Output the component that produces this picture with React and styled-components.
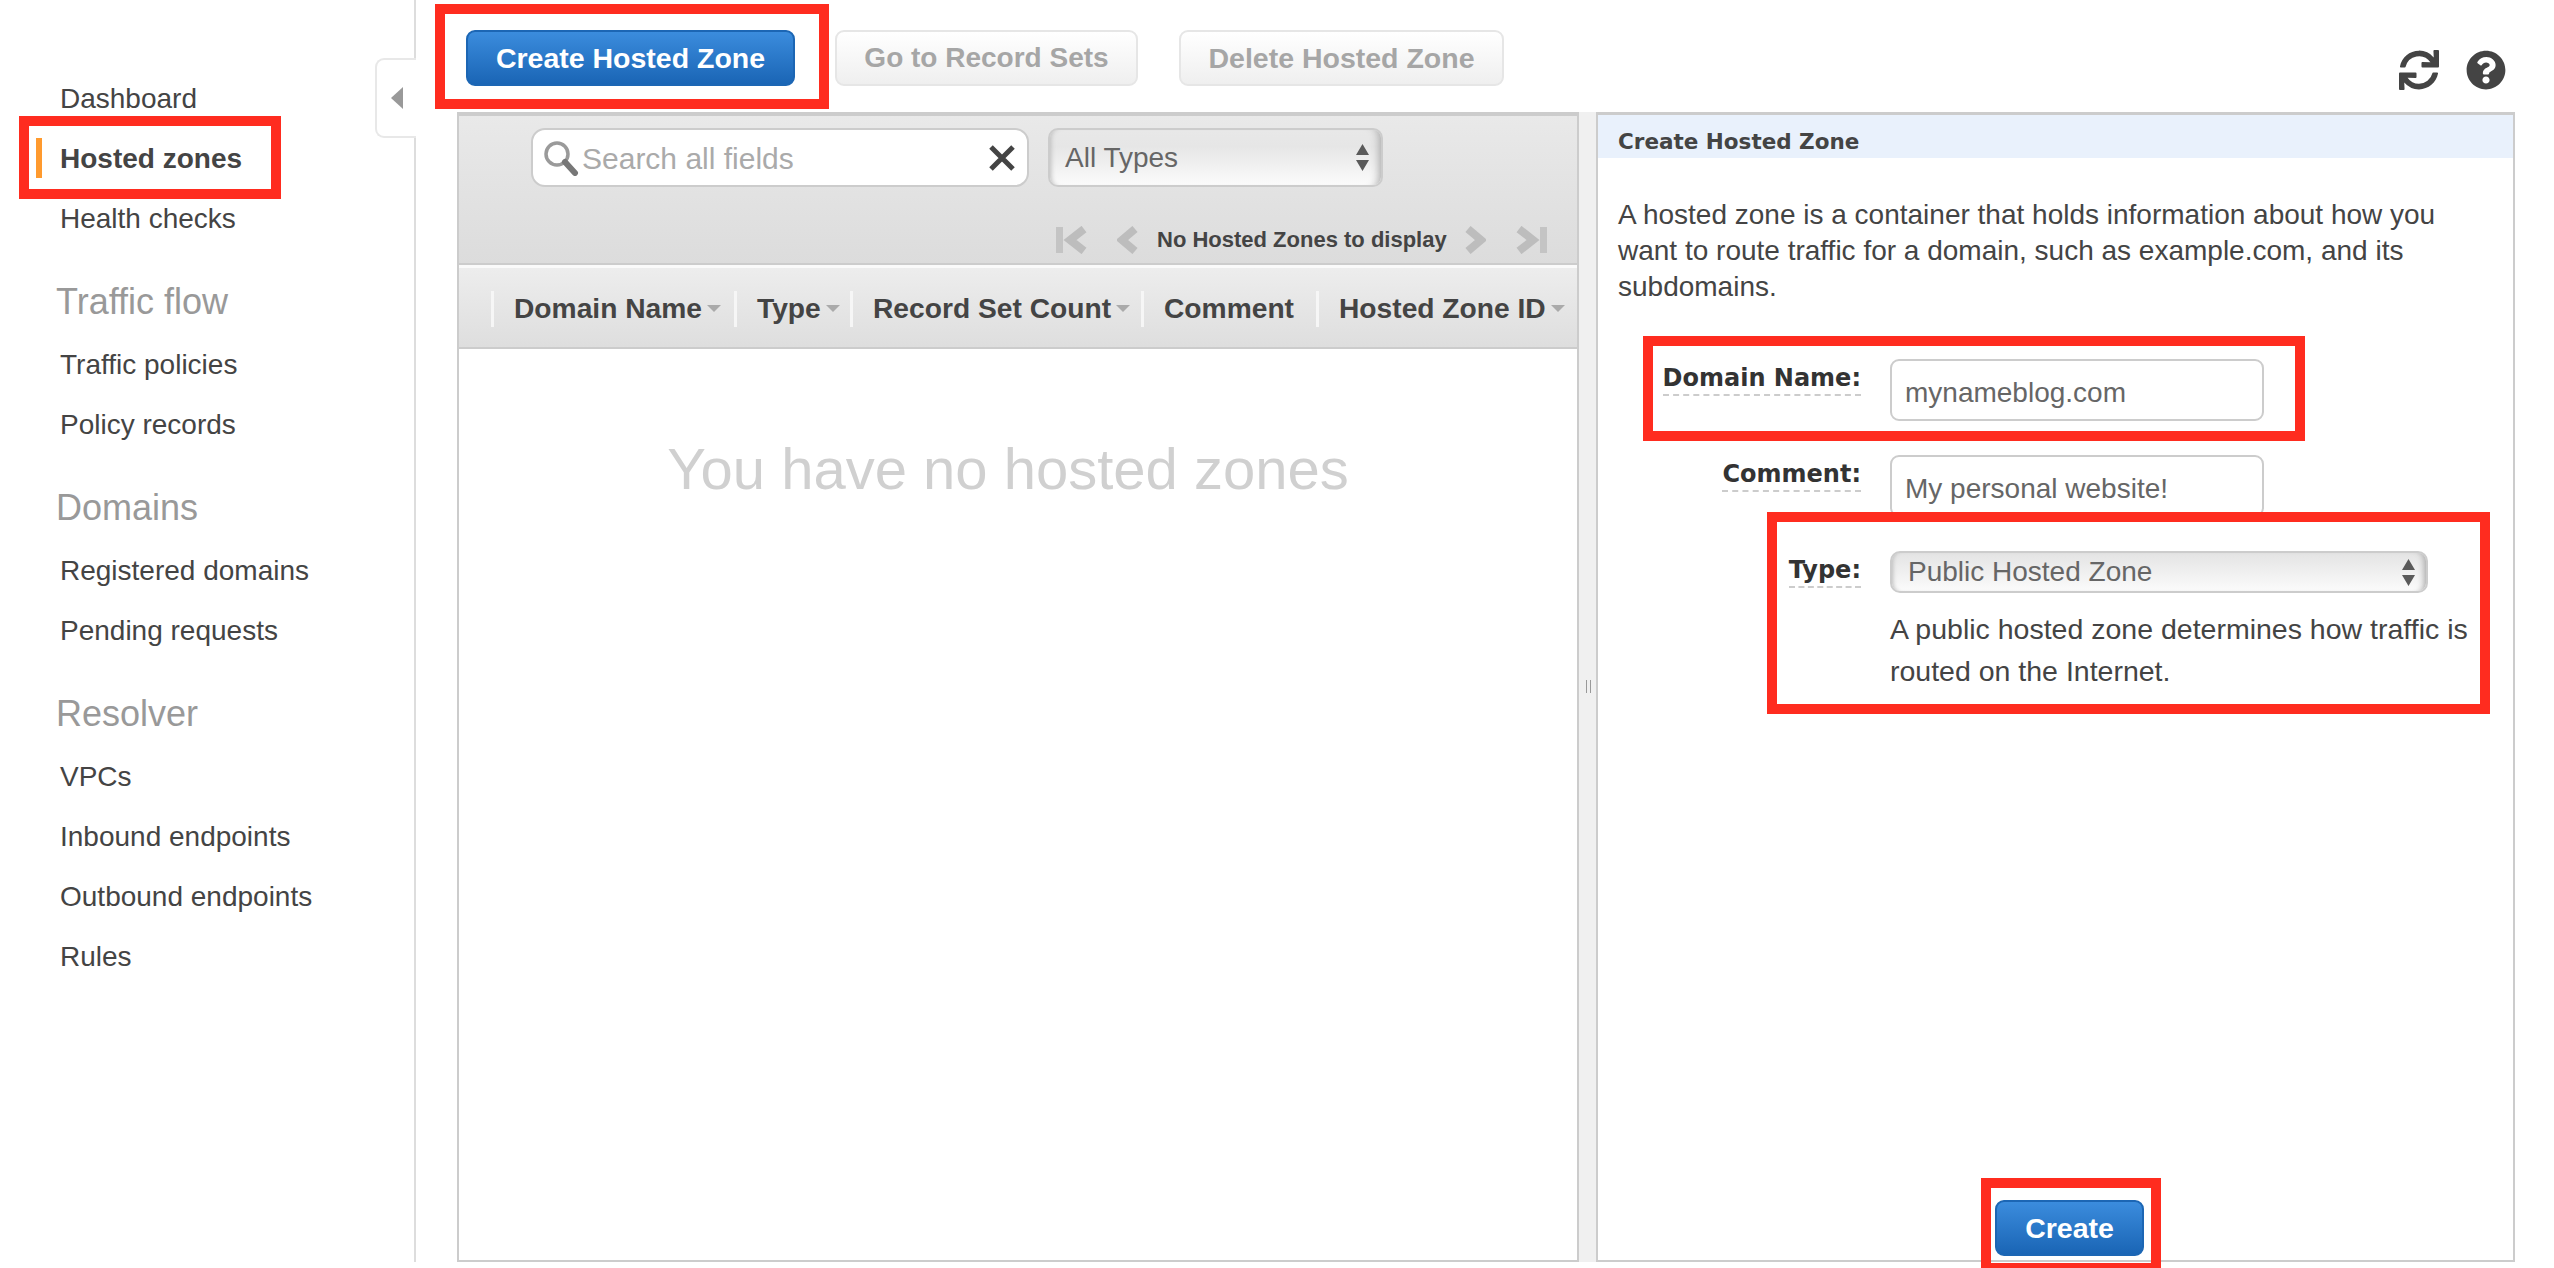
import React from "react";
import styled, { createGlobalStyle } from "styled-components";
import { FaSync, FaQuestionCircle } from "react-icons/fa";

const navGroups = [
    { items: ["Dashboard", "Hosted zones", "Health checks"] },
    { title: "Traffic flow", items: ["Traffic policies", "Policy records"] },
    { title: "Domains", items: ["Registered domains", "Pending requests"] },
    { title: "Resolver", items: ["VPCs", "Inbound endpoints", "Outbound endpoints", "Rules"] },
];

const columns = [
    { label: "Domain Name", width: 243, sort: true },
    { label: "Type", width: 116, sort: true },
    { label: "Record Set Count", width: 291, sort: true },
    { label: "Comment", width: 175 },
    { label: "Hosted Zone ID", width: 263, sort: true },
];

function SearchIcon() {
    return (
        <SearchGlyph viewBox="0 0 36 36">
            <circle cx="14" cy="14" r="11" fill="#fff" stroke="#9a9a9a" strokeWidth="3.5" />
            <path d="M22 22 L32 33" stroke="#777" strokeWidth="6" strokeLinecap="round" />
        </SearchGlyph>
    );
}

function ClearIcon() {
    return (
        <ClearGlyph viewBox="0 0 28 28">
            <path d="M3 3 L25 25 M25 3 L3 25" stroke="#444" strokeWidth="5" />
        </ClearGlyph>
    );
}

function UpDownArrows() {
    return (
        <ArrowGlyph viewBox="0 0 13 27">
            <path d="M6.5 0 L13 11 H0 Z M0 16 H13 L6.5 27 Z" fill="#5a5a5a" />
        </ArrowGlyph>
    );
}

function PagerFirst() {
    return (
        <PagerGlyph $width={36} viewBox="0 0 36 28">
            <rect x="0" y="1" width="7" height="26" fill="#c4c4c4" />
            <path d="M28 3 L14 14 L28 25" fill="none" stroke="#bdbdbd" strokeWidth="8" />
        </PagerGlyph>
    );
}

function PagerLast() {
    return (
        <PagerGlyph $width={36} viewBox="0 0 36 28">
            <rect x="24" y="1" width="7" height="26" fill="#c4c4c4" />
            <path d="M3 3 L17 14 L3 25" fill="none" stroke="#bdbdbd" strokeWidth="8" />
        </PagerGlyph>
    );
}

function PagerStep({ next, left, right }) {
    return (
        <PagerGlyph $width={22} $left={left} $right={right} viewBox="0 0 22 28">
            <path
                d={next ? "M4 3 L17 14 L4 25" : "M18 3 L5 14 L18 25"}
                fill="none"
                stroke="#bdbdbd"
                strokeWidth="8"
            />
        </PagerGlyph>
    );
}

function App() {
    return (
        <Page>
            <GlobalStyle />
            <Sidebar>
                <CollapseTab>
                    <CollapseArrow />
                </CollapseTab>
                {navGroups.map((group, i) => (
                    <NavGroup key={i}>
                        {group.title && <NavHeading>{group.title}</NavHeading>}
                        {group.items.map((item) => (
                            <NavItem key={item} $active={item === "Hosted zones"}>
                                {item}
                            </NavItem>
                        ))}
                    </NavGroup>
                ))}
            </Sidebar>

            <Main>
                <Toolbar>
                    <PrimaryButton $width={329}>Create Hosted Zone</PrimaryButton>
                    <DisabledButton $gap={40} $width={303} $size={28}>Go to Record Sets</DisabledButton>
                    <DisabledButton $gap={41} $width={325} $size={28.5}>Delete Hosted Zone</DisabledButton>
                    <ToolIcons>
                        <FaSync size={40} />
                        <FaQuestionCircle size={40} />
                    </ToolIcons>
                </Toolbar>

                <Panels>
                    <ListPanel>
                        <ListControls>
                            <FilterRow>
                                <SearchBox>
                                    <SearchIcon />
                                    <SearchText>Search all fields</SearchText>
                                    <ClearIcon />
                                </SearchBox>
                                <TypeFilter>
                                    All Types
                                    <UpDownArrows />
                                </TypeFilter>
                            </FilterRow>
                            <PagerRow>
                                <PagerFirst />
                                <PagerStep left={25} right={18} />
                                <PagerText>No Hosted Zones to display</PagerText>
                                <PagerStep next left={17} right={30} />
                                <PagerLast />
                            </PagerRow>
                        </ListControls>
                        <TableHead>
                            {columns.map((col) => (
                                <HeadCell key={col.label} $width={col.width}>
                                    {col.label}
                                    {col.sort && <SortArrow />}
                                </HeadCell>
                            ))}
                        </TableHead>
                        <EmptyText>You have no hosted zones</EmptyText>
                    </ListPanel>

                    <Splitter>
                        <SplitHandle />
                    </Splitter>

                    <FormPanel>
                        <FormTitle>Create Hosted Zone</FormTitle>
                        <Intro>
                            A hosted zone is a container that holds information about how you want to route
                            traffic for a domain, such as example.com, and its subdomains.
                        </Intro>
                        <FormGrid>
                            <FieldLabel>
                                <span>Domain Name:</span>
                            </FieldLabel>
                            <TextField>mynameblog.com</TextField>
                            <FieldLabel>
                                <span>Comment:</span>
                            </FieldLabel>
                            <TextField>My personal website!</TextField>
                            <FieldLabel>
                                <span>Type:</span>
                            </FieldLabel>
                            <div>
                                <TypeSelect>
                                    Public Hosted Zone
                                    <UpDownArrows />
                                </TypeSelect>
                                <HelpText>
                                    A public hosted zone determines how traffic is routed on the Internet.
                                </HelpText>
                            </div>
                        </FormGrid>
                        <FormFooter>
                            <SubmitButton $width={149}>Create</SubmitButton>
                        </FormFooter>
                    </FormPanel>
                </Panels>
            </Main>

            <Callout $x={19} $y={116} $w={262} $h={83} />
            <Callout $x={435} $y={4} $w={394} $h={105} />
            <Callout $x={1643} $y={336} $w={662} $h={105} />
            <Callout $x={1767} $y={512} $w={723} $h={202} />
            <Callout $x={1981} $y={1178} $w={180} $h={95} />
        </Page>
    );
}

const GlobalStyle = createGlobalStyle`
    html, body {
        margin: 0;
        padding: 0;
        background: #fff;
        overflow: hidden;
    }
    * {
        box-sizing: border-box;
    }
`;

const Page = styled.div`
    position: relative;
    display: flex;
    width: 2554px;
    height: 1268px;
    overflow: hidden;
    background: #fff;
    color: #444;
    font-family: "Liberation Sans", Arial, sans-serif;
`;

const Sidebar = styled.aside`
    position: relative;
    flex: none;
    width: 416px;
    height: 1262px;
    padding-top: 69px;
    border-right: 2px solid #ddd;
`;

const CollapseTab = styled.div`
    position: absolute;
    top: 58px;
    right: -2px;
    width: 41px;
    height: 80px;
    display: flex;
    align-items: center;
    padding-left: 14px;
    background: #fff;
    border: 2px solid #e8e8e8;
    border-right: 0;
    border-radius: 9px 0 0 9px;
`;

const CollapseArrow = styled.div`
    width: 0;
    height: 0;
    border-top: 11px solid transparent;
    border-bottom: 11px solid transparent;
    border-right: 12px solid #999;
`;

const NavGroup = styled.nav`
    margin-bottom: 20px;
`;

const NavHeading = styled.h3`
    margin: 0;
    height: 66px;
    padding-left: 56px;
    font-size: 36px;
    font-weight: 400;
    line-height: 66px;
    color: #999;
`;

const NavItem = styled.div`
    position: relative;
    height: 60px;
    padding-left: 60px;
    font-size: 28px;
    line-height: 60px;
    font-weight: ${(props) => (props.$active ? 700 : 400)};
    color: #444;

    &::before {
        content: "";
        display: ${(props) => (props.$active ? "block" : "none")};
        position: absolute;
        left: 36px;
        top: 9px;
        width: 6px;
        height: 40px;
        background: #ff9a2e;
    }
`;

const Main = styled.main`
    flex: 1;
    min-width: 0;
    display: flex;
    flex-direction: column;
`;

const Toolbar = styled.div`
    display: flex;
    align-items: flex-start;
    height: 112px;
    padding: 30px 48px 0 50px;
`;

const PrimaryButton = styled.button`
    height: 56px;
    width: ${(props) => props.$width}px;
    padding: 0;
    border: 2px solid #1c66b4;
    border-radius: 9px;
    background: linear-gradient(#3b8cdd, #1a65b5);
    color: #fff;
    font-family: inherit;
    font-size: 28.5px;
    font-weight: 700;
`;

const SubmitButton = styled(PrimaryButton)``;

const DisabledButton = styled.button`
    height: 56px;
    width: ${(props) => props.$width}px;
    margin-left: ${(props) => props.$gap}px;
    padding: 0;
    border: 2px solid #e6e6e6;
    border-radius: 9px;
    background: linear-gradient(#fff, #efefef);
    color: #a6a6a6;
    font-family: inherit;
    font-size: ${(props) => props.$size}px;
    font-weight: 700;
`;

const ToolIcons = styled.div`
    display: flex;
    gap: 27px;
    margin-left: auto;
    padding-top: 20px;
    color: #444;
`;

const Panels = styled.div`
    display: flex;
    height: 1150px;
    padding-left: 41px;
`;

const ListPanel = styled.section`
    display: flex;
    flex-direction: column;
    flex: none;
    width: 1122px;
    border: 2px solid #ccc;
    border-top-width: 4px;
`;

const ListControls = styled.div`
    height: 149px;
    padding: 12px 0 0 72px;
    background: linear-gradient(#e9e9e9, #dcdcdc);
    border-bottom: 2px solid #ccc;
`;

const FilterRow = styled.div`
    display: flex;
    gap: 19px;
`;

const SearchBox = styled.div`
    display: flex;
    align-items: center;
    width: 498px;
    height: 59px;
    padding: 0 11px 0 10px;
    background: #fff;
    border: 2px solid #ccc;
    border-radius: 14px;
`;

const SearchGlyph = styled.svg`
    flex: none;
    width: 36px;
    height: 36px;
`;

const SearchText = styled.span`
    flex: 1;
    padding: 2px 0 0 3px;
    font-size: 30px;
    color: #aaa;
`;

const ClearGlyph = styled.svg`
    flex: none;
    width: 28px;
    height: 28px;
`;

const ArrowGlyph = styled.svg`
    flex: none;
    width: 13px;
    height: 27px;
    margin-left: auto;
`;

const TypeFilter = styled.div`
    display: flex;
    align-items: center;
    width: 335px;
    height: 59px;
    padding: 0 12px 0 15px;
    background: linear-gradient(#e8e8e8, #e6e6e6 30%, #fbfbfb);
    border: 2px solid #ccc;
    border-radius: 10px;
    box-shadow: inset 5px 0 5px -4px #bbb, inset -12px 0 8px -10px #aaa;
    font-size: 28px;
    color: #666;
`;

const PagerRow = styled.div`
    display: flex;
    align-items: center;
    height: 28px;
    margin-top: 39px;
    padding-left: 525px;
`;

const PagerGlyph = styled.svg`
    flex: none;
    width: ${(props) => props.$width}px;
    height: 28px;
    margin-left: ${(props) => props.$left || 0}px;
    margin-right: ${(props) => props.$right || 0}px;
`;

const PagerText = styled.span`
    font-size: 22px;
    font-weight: 700;
    color: #444;
    white-space: nowrap;
`;

const TableHead = styled.div`
    display: flex;
    align-items: center;
    flex: none;
    height: 84px;
    padding: 2px 0 0 32px;
    border-top: 3px solid #fafafa;
    border-bottom: 2px solid #ccc;
    background: linear-gradient(#ededed, #dedede);
`;

const HeadCell = styled.div`
    display: flex;
    align-items: center;
    flex: none;
    width: ${(props) => props.$width}px;
    height: 36px;
    padding-left: 20px;
    border-left: 3px solid #f6f6f6;
    font-size: 28.2px;
    font-weight: 700;
    color: #444;
    white-space: nowrap;
`;

const SortArrow = styled.span`
    width: 0;
    height: 0;
    margin-left: 5px;
    border-left: 7px solid transparent;
    border-right: 7px solid transparent;
    border-top: 7px solid #aaa;
`;

const EmptyText = styled.div`
    padding: 87px 20px 0 0;
    text-align: center;
    font-size: 58px;
    line-height: 66px;
    color: #d0d0d0;
`;

const Splitter = styled.div`
    display: flex;
    flex: none;
    width: 17px;
    padding: 568px 0 0 7px;
    background: #f0f0f0;
`;

const SplitHandle = styled.div`
    width: 5px;
    height: 13px;
    border-left: 1px solid #999;
    border-right: 1px solid #999;
`;

const FormPanel = styled.section`
    display: flex;
    flex-direction: column;
    flex: none;
    width: 919px;
    border: 2px solid #ccc;
    border-top-width: 3px;
`;

const FormTitle = styled.h2`
    flex: none;
    margin: 0;
    height: 43px;
    padding-left: 20px;
    background: #e9f1fc;
    font-family: "DejaVu Sans", Verdana, sans-serif;
    font-size: 21.5px;
    font-weight: 700;
    line-height: 54px;
    color: #444;
`;

const Intro = styled.p`
    margin: 39px 0 0;
    padding: 0 60px 0 20px;
    font-size: 28px;
    line-height: 36px;
    color: #444;
`;

const FormGrid = styled.div`
    display: grid;
    grid-template-columns: 243px 1fr;
    column-gap: 29px;
    row-gap: 34px;
    margin-top: 54px;
    padding-left: 20px;
`;

const FieldLabel = styled.div`
    display: flex;
    justify-content: flex-end;
    align-items: flex-start;
    padding-top: 6px;
    font-family: "DejaVu Sans", Verdana, sans-serif;
    font-size: 24px;
    font-weight: 700;
    line-height: 26px;
    color: #333;

    span {
        border-bottom: 2px dashed #ccc;
        padding-bottom: 3px;
    }
`;

const TextField = styled.div`
    width: 374px;
    height: 62px;
    padding-left: 13px;
    border: 2px solid #ccc;
    border-radius: 9px;
    font-size: 28px;
    line-height: 64px;
    color: #666;
`;

const TypeSelect = styled.div`
    display: flex;
    align-items: center;
    width: 538px;
    height: 42px;
    padding: 0 11px 0 16px;
    background: linear-gradient(#e4e4e4, #fbfbfb);
    border: 2px solid #ccc;
    border-radius: 10px;
    box-shadow: inset 4px 0 4px -3px #bbb, inset -8px 0 6px -6px #aaa;
    font-size: 28px;
    color: #666;
`;

const HelpText = styled.p`
    margin: 15px 0 0;
    width: 590px;
    font-size: 28.5px;
    line-height: 42px;
    color: #444;
`;

const FormFooter = styled.div`
    display: flex;
    justify-content: center;
    margin-top: auto;
    padding: 0 0 4px 28px;
`;

/* red markers drawn on top of the screenshot */
const Callout = styled.div`
    position: absolute;
    left: ${(props) => props.$x}px;
    top: ${(props) => props.$y}px;
    width: ${(props) => props.$w}px;
    height: ${(props) => props.$h}px;
    border: 10px solid #ff2c1f;
    pointer-events: none;
`;

export default App;
